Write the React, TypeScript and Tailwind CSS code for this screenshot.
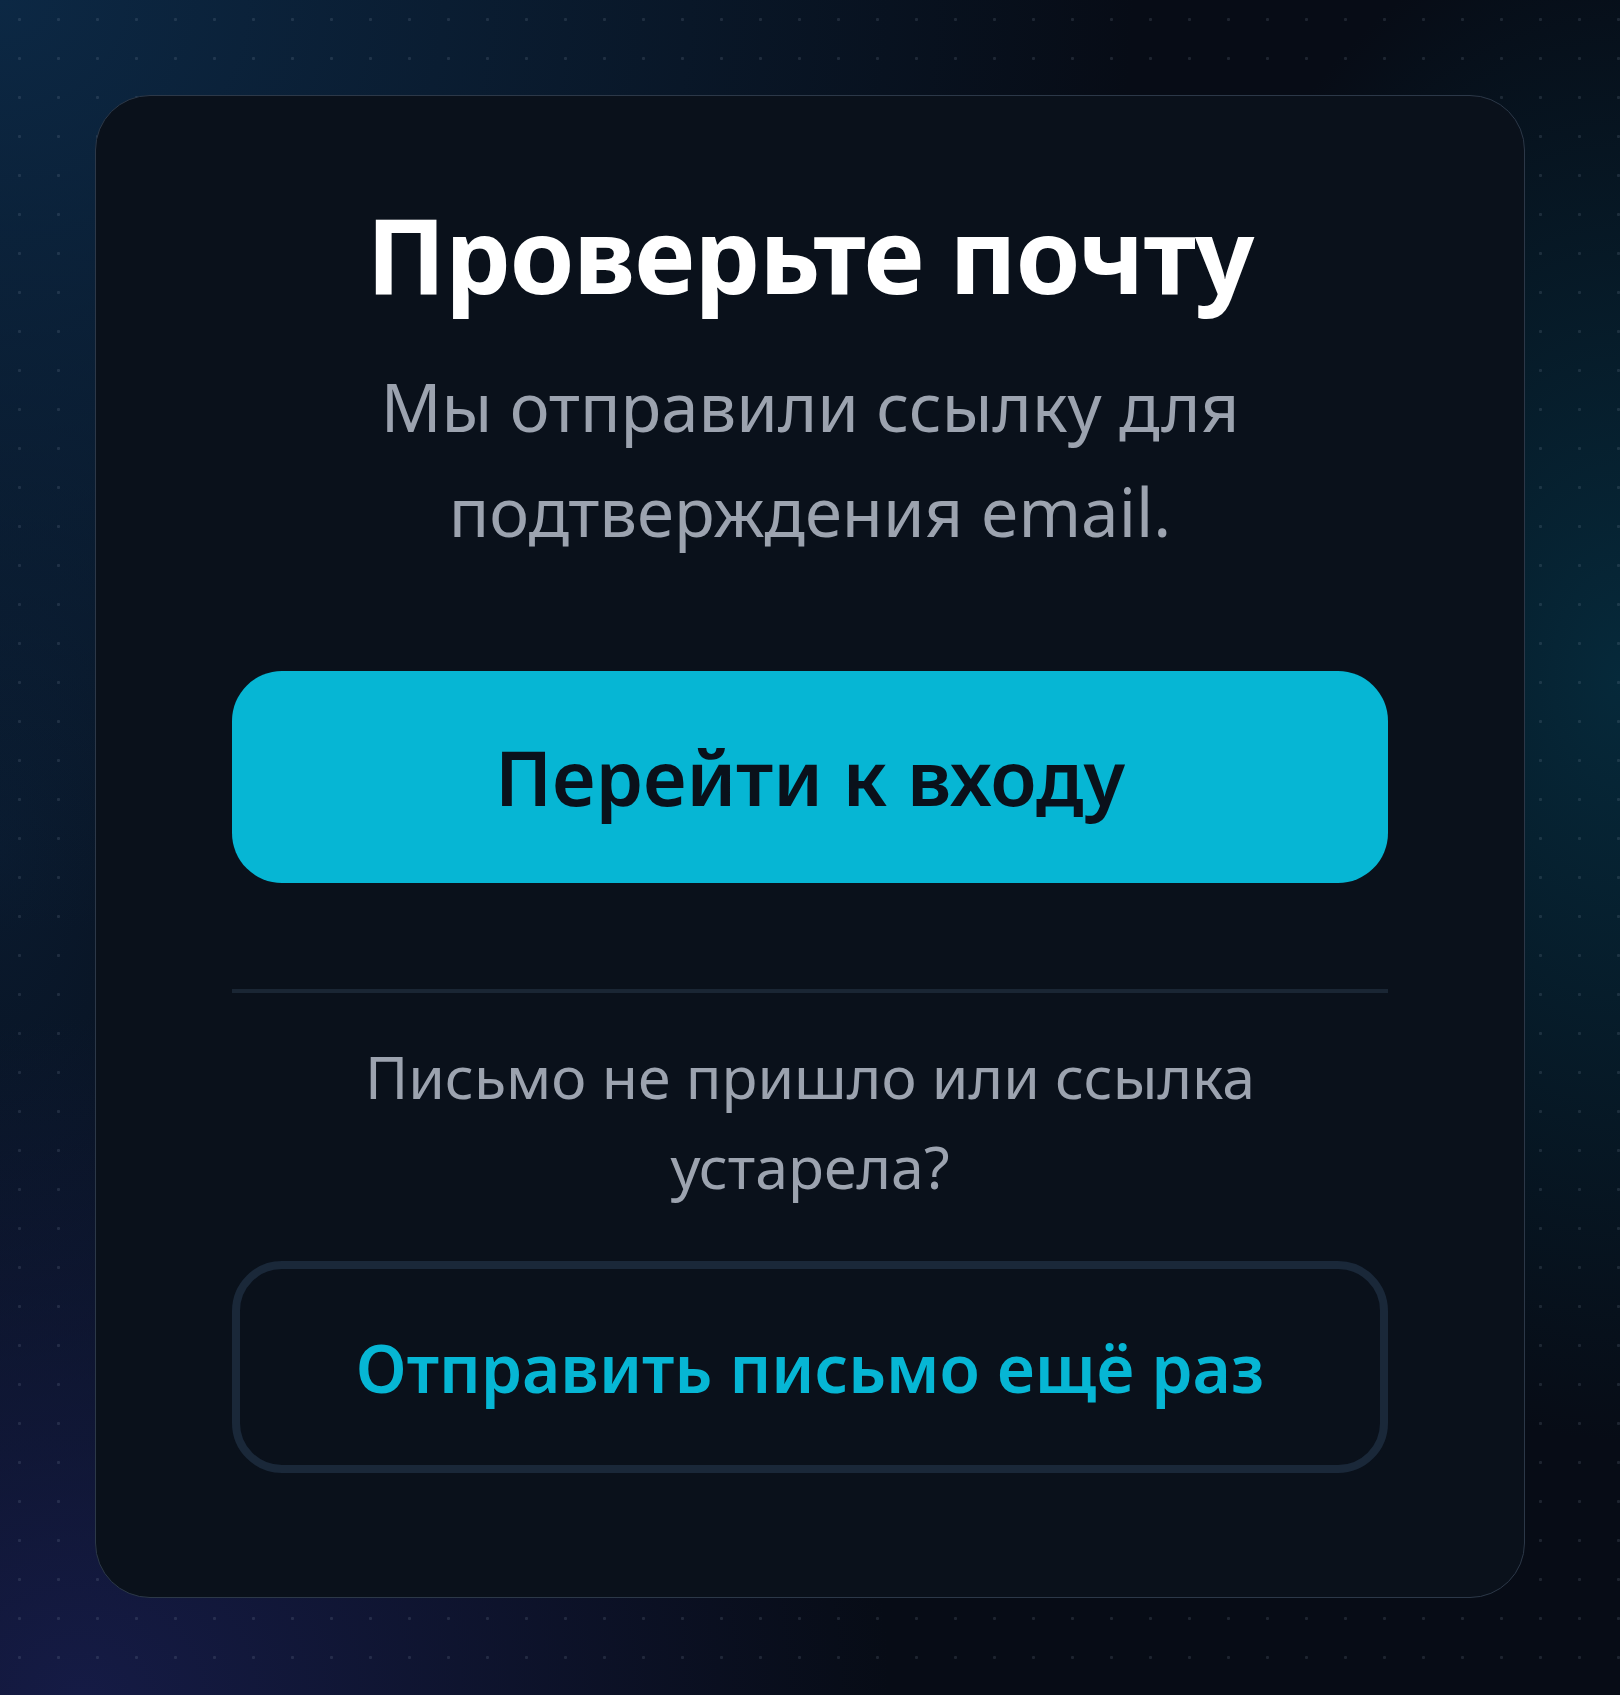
import React from "react";

export default function App() {
  return (
    <div
      className="min-h-[1695px] w-full bg-[#070c16] bg-[radial-gradient(ellipse_70%_55%_at_0%_0%,#0c2844_0%,transparent_100%),radial-gradient(ellipse_50%_40%_at_5%_100%,#151b45_0%,transparent_100%),radial-gradient(ellipse_30%_45%_at_100%_40%,#06293a_0%,transparent_100%),radial-gradient(ellipse_25%_50%_at_0%_50%,#0a1a2e_0%,transparent_100%)]"
      style={{ fontFamily: '"Noto Sans", "Open Sans", sans-serif' }}
    >
      <div className="min-h-[1695px] w-full bg-[radial-gradient(circle,rgba(148,163,184,0.16)_1.3px,transparent_1.8px)] bg-[size:39px_39px] px-[95px] pt-[95px] pb-[96px]">
        <div className="rounded-[55px] border border-[#2c3848] bg-[#0a111b] px-[136px] pt-[98px] pb-[124px] flex flex-col items-stretch">
          <h1 className="text-center text-white font-bold text-[104px] leading-[120px] whitespace-nowrap tracking-[-0.01em]">
            Проверьте почту
          </h1>
          <p className="mt-[40px] text-center text-[#9ca3af] font-normal text-[67px] leading-[105px]">
            Мы отправили ссылку для
            <br />
            подтверждения email.
          </p>
          <button className="mt-[107px] h-[212px] w-full rounded-[50px] bg-[#06b6d4] flex items-center justify-center text-[#0a111b] font-semibold text-[76px] leading-none">
            Перейти к входу
          </button>
          <div className="mt-[106px] h-[4px] w-full bg-[#1a2634]" />
          <p className="mt-[38px] text-center text-[#9ca3af] font-normal text-[59px] leading-[90px]">
            Письмо не пришло или ссылка
            <br />
            устарела?
          </p>
          <button className="mt-[50px] h-[212px] w-full rounded-[50px] border-[8px] border-[#1a2839] bg-transparent flex items-center justify-center text-[#06b6d4] font-semibold text-[66px] leading-none">
            Отправить письмо ещё раз
          </button>
        </div>
      </div>
    </div>
  );
}
